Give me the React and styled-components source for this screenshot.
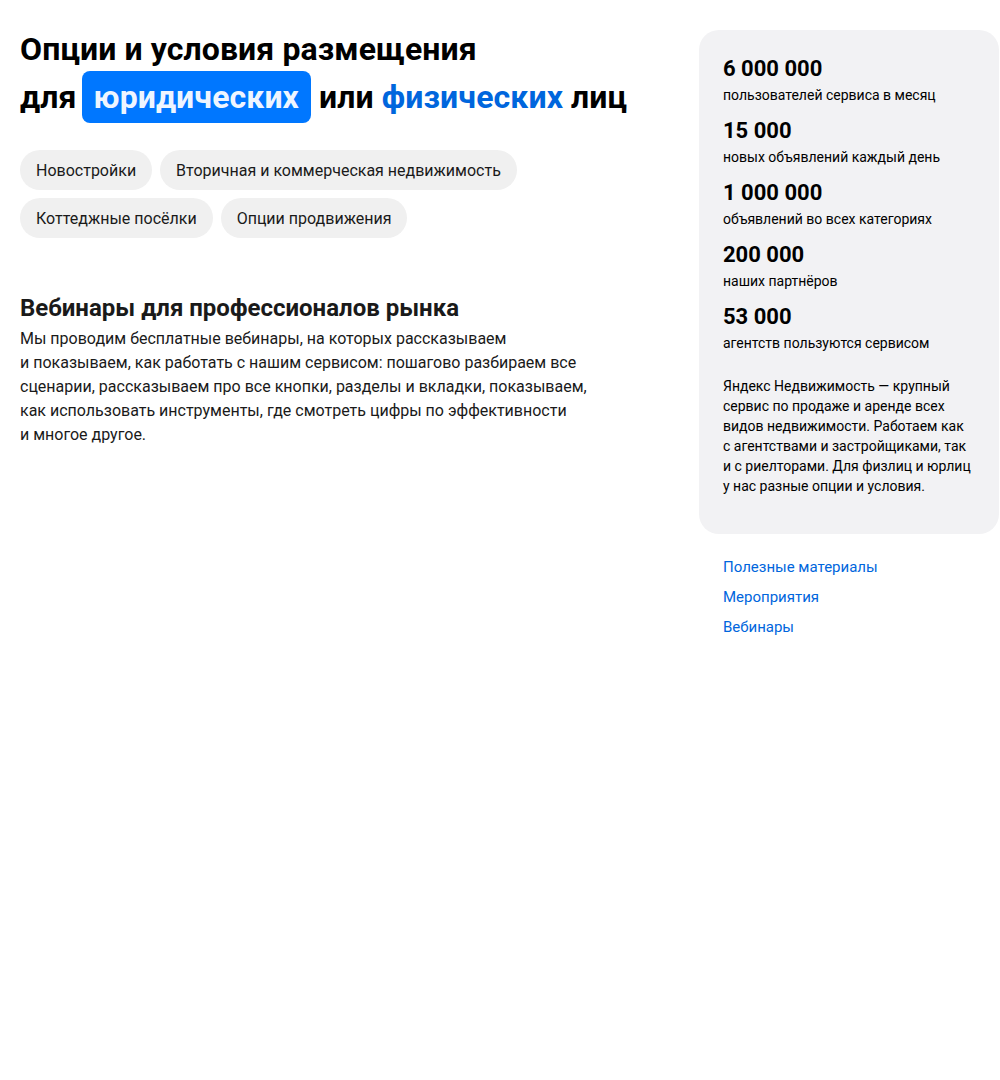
import React from 'react';
import styled, { createGlobalStyle } from 'styled-components';

const Global = createGlobalStyle`
  body {
    margin: 0;
    background: #fff;
    font-family: Roboto, "Noto Sans", sans-serif;
    color: #000;
  }
`;

const Page = styled.div`
  display: flex;
  justify-content: space-between;
  padding: 30px 1px 0 20px;
`;

const Main = styled.main`
  width: 640px;
`;

const Title = styled.h1`
  margin: -5px 0 0;
  font-size: 32px;
  line-height: 48px;
  font-weight: 700;
  letter-spacing: 0.1px;
`;

const Highlight = styled.span`
  display: inline-block;
  margin: -2px 0 -2px -3px;
  padding: 2px 12px;
  border-radius: 8px;
  background: #0077ff;
  color: #eef5ff;
  line-height: 48px;
`;

const Accent = styled.span`
  color: #0066dd;
`;

const Tabs = styled.div`
  display: flex;
  flex-wrap: wrap;
  gap: 8px;
  margin-top: 29px;
  max-width: 520px;
`;

const Tab = styled.a`
  display: inline-flex;
  align-items: center;
  height: 40px;
  padding: 0 16px;
  border-radius: 20px;
  background: #f0f0f0;
  font-size: 16px;
  color: #1a1a1a;
`;

const Section = styled.section`
  margin-top: 56px;
`;

const Subtitle = styled.h2`
  margin: 0 0 5px;
  font-size: 24px;
  line-height: 28px;
  font-weight: 700;
  color: #1a1a1a;
`;

const Text = styled.p`
  margin: 0;
  font-size: 16px;
  line-height: 24px;
  color: #1a1a1a;
`;

const Aside = styled.aside`
  width: 300px;
`;

const Card = styled.div`
  padding: 26px 24px 38px;
  border-radius: 20px;
  background: #f2f2f4;
`;

const Stat = styled.div`
  & + & {
    margin-top: 13px;
  }
`;

const Num = styled.div`
  font-size: 22px;
  line-height: 26px;
  font-weight: 700;
`;

const Label = styled.div`
  margin-top: 3px;
  font-size: 14px;
  line-height: 20px;
`;

const About = styled.p`
  margin: 23px 0 0;
  font-size: 14px;
  line-height: 20px;
  white-space: nowrap;
`;

const Links = styled.nav`
  display: flex;
  flex-direction: column;
  padding: 18px 24px;
`;

const Link = styled.a`
  font-size: 15px;
  line-height: 30px;
  color: #0066dd;
  text-decoration: none;
`;

const stats = [
  ['6 000 000', 'пользователей сервиса в месяц'],
  ['15 000', 'новых объявлений каждый день'],
  ['1 000 000', 'объявлений во всех категориях'],
  ['200 000', 'наших партнёров'],
  ['53 000', 'агентств пользуются сервисом'],
];

const webinarLines = [
  'Мы проводим бесплатные вебинары, на которых рассказываем',
  'и показываем, как работать с нашим сервисом: пошагово разбираем все',
  'сценарии, рассказываем про все кнопки, разделы и вкладки, показываем,',
  'как использовать инструменты, где смотреть цифры по эффективности',
  'и многое другое.',
];

const aboutLines = [
  'Яндекс Недвижимость — крупный',
  'сервис по продаже и аренде всех',
  'видов недвижимости. Работаем как',
  'с агентствами и застройщиками, так',
  'и с риелторами. Для физлиц и юрлиц',
  'у нас разные опции и условия.',
];

const withBreaks = (lines) =>
  lines.map((l, i) => (
    <React.Fragment key={i}>
      {l}
      {i < lines.length - 1 && <br />}
    </React.Fragment>
  ));

export default () => (
  <Page>
    <Global />
    <Main>
      <Title>
        Опции и условия размещения
        <br />
        для <Highlight>юридических</Highlight> или <Accent>физических</Accent> лиц
      </Title>
      <Tabs>
        <Tab>Новостройки</Tab>
        <Tab>Вторичная и коммерческая недвижимость</Tab>
        <Tab>Коттеджные посёлки</Tab>
        <Tab>Опции продвижения</Tab>
      </Tabs>
      <Section>
        <Subtitle>Вебинары для профессионалов рынка</Subtitle>
        <Text>{withBreaks(webinarLines)}</Text>
      </Section>
    </Main>
    <Aside>
      <Card>
        {stats.map(([n, l]) => (
          <Stat key={n}>
            <Num>{n}</Num>
            <Label>{l}</Label>
          </Stat>
        ))}
        <About>{withBreaks(aboutLines)}</About>
      </Card>
      <Links>
        <Link href="#">Полезные материалы</Link>
        <Link href="#">Мероприятия</Link>
        <Link href="#">Вебинары</Link>
      </Links>
    </Aside>
  </Page>
);
